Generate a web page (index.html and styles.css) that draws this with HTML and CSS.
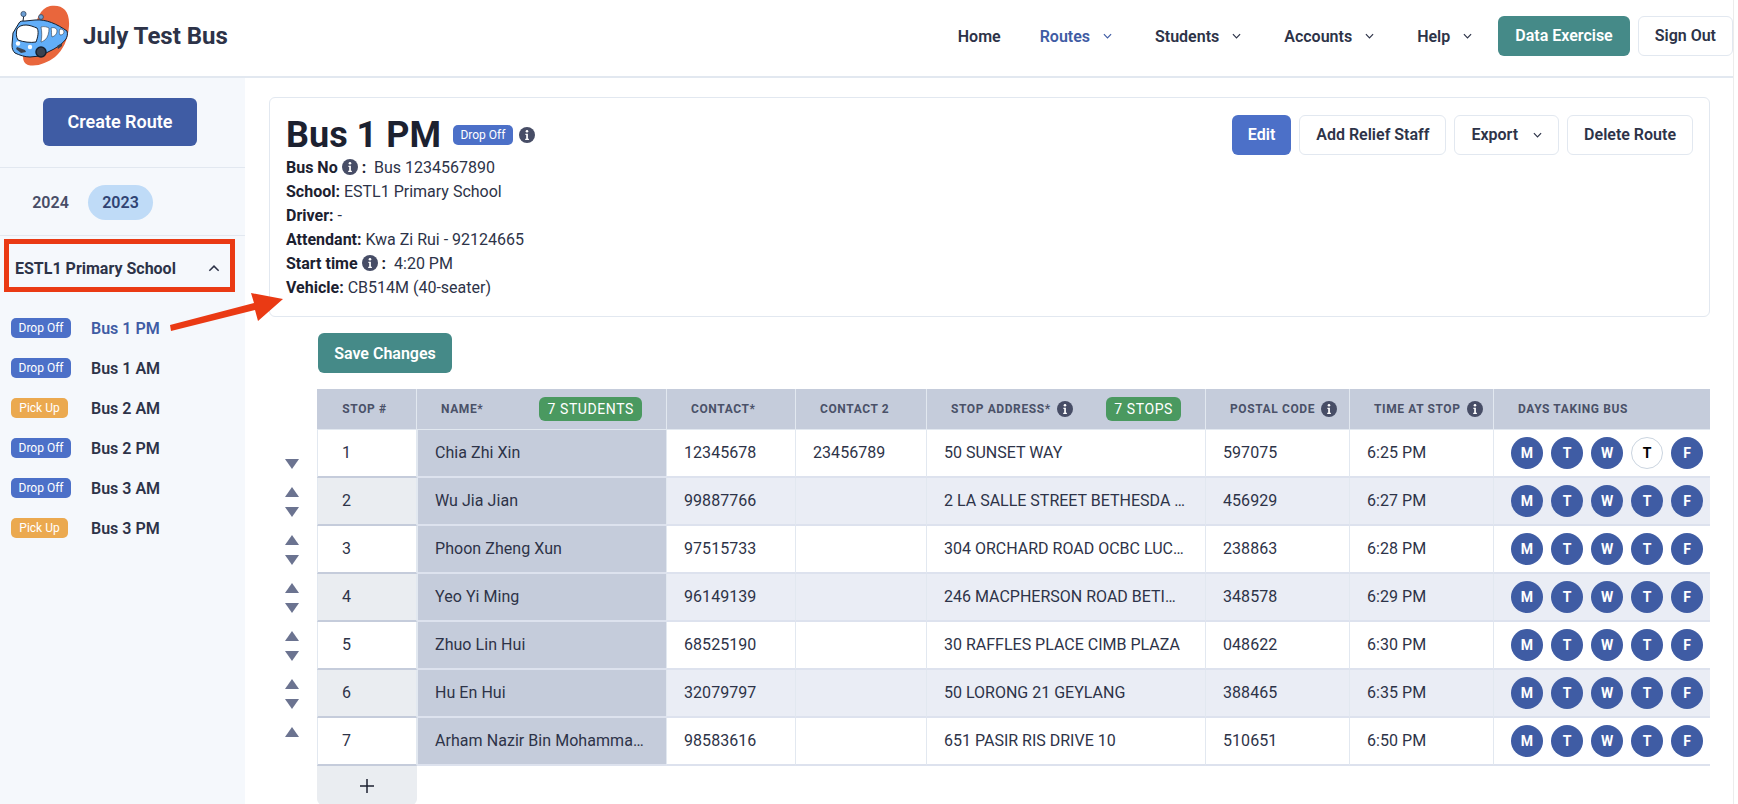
FILE: index.html
```html
<!DOCTYPE html>
<html lang="en">
<head>
<meta charset="UTF-8">
<meta name="viewport" content="width=device-width, initial-scale=1.0">
<title>July Test Bus</title>
<link rel="stylesheet" href="styles.css">
</head>
<body>

<svg class="icon-defs" width="0" height="0">
  <symbol id="info" viewBox="0 0 16 16">
    <circle cx="8" cy="8" r="8" fill="#474d66"/>
    <circle cx="8" cy="4.3" r="1.3" fill="#fff"/>
    <path d="M6.4 6.800h2.500v5h1V13H6.200v-1.200h1V8h-.8z" fill="#fff"/>
  </symbol>
  <symbol id="chev" viewBox="0 0 10 6">
    <path d="M1 1l4 4 4-4" fill="none" stroke="currentColor" stroke-width="1.3"/>
  </symbol>
</svg>

<header class="topbar">
  <div class="brand">
    <svg class="logo" viewBox="0 0 72 66">
      <path d="M50 6c12-2 20 4 19 20-1 14-6 24-14 31-8 6-18 10-27 8-5-2-6-7-4-14 2-8 5-14 9-21C37 20 40 8 50 6z" fill="#e9663c"/>
      <path d="M13 33l6-10c1-2 3-2 6-2l10-1c11-1 22 4 32 11 1 3 0 6-1 8-3 4-7 7-12 10l-14 7-10 1c-5 0-11-2-15-4-2-2-3-4-3-8z" fill="#62aef8" stroke="#17202e" stroke-width="1"/>
      <path d="M17 29c2-3 5-4 9-4 4 0 8 2 11 3 2 3 1 9-1 14-5 1-13 0-18-2-2-3-2-7-1-11z" fill="#fff" stroke="#17202e" stroke-width="1"/>
      <path d="M41 27c3-1 6 0 8 1 0 5-1 9-4 12-2 1-3 2-4 2 1-5 1-10 0-15zM51 28c3-1 6 0 6 3 0 3-2 5-5 6-1-3 0-6-1-9zM60 29c2 0 4 1 4 3s-2 3-4 3c-1-2-1-4 0-6z" fill="#fff" stroke="#17202e" stroke-width=".5"/>
      <circle cx="41" cy="52" r="5" fill="#3a4250" stroke="#17202e" stroke-width="1.500"/>
      <circle cx="18" cy="43.500" r="2.200" fill="#fff"/>
      <circle cx="30" cy="47" r="2.200" fill="#fff"/>
      <path d="M16 49l5 4 5-1-1-2-8-3zM58 49l4-3v-3l-5 3z" fill="#3a4250"/>
      <path d="M23 21l1-7M41 20v-3" stroke="#17202e" stroke-width="1"/>
      <circle cx="23.500" cy="14" r="2.600" fill="#6d9fd4" stroke="#33475f" stroke-width=".8"/>
      <circle cx="41" cy="17" r="2.400" fill="#6d9fd4" stroke="#33475f" stroke-width=".8"/>
    </svg>
    <span class="brand-name">July Test Bus</span>
  </div>
  <nav class="topnav">
    <a class="nav-link nav-home">Home</a>
    <a class="nav-link active">Routes <svg class="chev"><use href="#chev"/></svg></a>
    <a class="nav-link">Students <svg class="chev"><use href="#chev"/></svg></a>
    <a class="nav-link">Accounts <svg class="chev"><use href="#chev"/></svg></a>
    <a class="nav-link nav-help">Help <svg class="chev"><use href="#chev"/></svg></a>
    <button class="btn btn-teal data-btn">Data Exercise</button>
    <button class="btn btn-plain signout">Sign Out</button>
  </nav>
</header>

<div class="layout">
  <aside class="sidebar">
    <div class="side-create">
      <button class="btn create-btn">Create Route</button>
    </div>
    <div class="years">
      <span class="year">2024</span>
      <span class="year year-on">2023</span>
    </div>
    <div class="school-row">
      <span>ESTL1 Primary School</span>
      <svg class="chev-up"><use href="#chev"/></svg>
    </div>
    <ul class="route-list">
      <li><span class="badge drop">Drop Off</span><span class="route-name current">Bus 1 PM</span></li>
      <li><span class="badge drop">Drop Off</span><span class="route-name">Bus 1 AM</span></li>
      <li><span class="badge pick">Pick Up</span><span class="route-name">Bus 2 AM</span></li>
      <li><span class="badge drop">Drop Off</span><span class="route-name">Bus 2 PM</span></li>
      <li><span class="badge drop">Drop Off</span><span class="route-name">Bus 3 AM</span></li>
      <li><span class="badge pick">Pick Up</span><span class="route-name">Bus 3 PM</span></li>
    </ul>
  </aside>

  <main class="content">
    <section class="card">
      <div class="card-info">
        <div class="title-row">
          <h1>Bus 1 PM</h1>
          <span class="badge drop">Drop Off</span>
          <svg class="info"><use href="#info"/></svg>
        </div>
        <p><b>Bus No</b> <svg class="info"><use href="#info"/></svg> <b>:</b>&nbsp; Bus 1234567890</p>
        <p><b>School:</b> ESTL1 Primary School</p>
        <p><b>Driver:</b> -</p>
        <p><b>Attendant:</b> Kwa Zi Rui - 92124665</p>
        <p><b>Start time</b> <svg class="info"><use href="#info"/></svg> <b>:</b>&nbsp; 4:20 PM</p>
        <p><b>Vehicle:</b> CB514M (40-seater)</p>
      </div>
      <div class="card-actions">
        <button class="btn btn-blue">Edit</button>
        <button class="btn btn-plain">Add Relief Staff</button>
        <button class="btn btn-plain export-btn">Export <svg class="chev"><use href="#chev"/></svg></button>
        <button class="btn btn-plain">Delete Route</button>
      </div>
    </section>

    <div class="save-row">
      <button class="btn btn-teal save-btn">Save Changes</button>
    </div>

    <div class="table-area">
      <div class="movers">
        <div class="mover"><i></i><i class="down"></i></div>
        <div class="mover"><i class="up"></i><i class="down"></i></div>
        <div class="mover"><i class="up"></i><i class="down"></i></div>
        <div class="mover"><i class="up"></i><i class="down"></i></div>
        <div class="mover"><i class="up"></i><i class="down"></i></div>
        <div class="mover"><i class="up"></i><i class="down"></i></div>
        <div class="mover"><i class="up"></i><i></i></div>
      </div>
      <div class="table-col">
        <table class="stops">
          <colgroup>
            <col class="c-stop"><col class="c-name"><col class="c-contact"><col class="c-contact2">
            <col class="c-addr"><col class="c-postal"><col class="c-time"><col class="c-days">
          </colgroup>
          <thead>
            <tr>
              <th class="center">Stop #</th>
              <th><div class="th-flex"><span>Name*</span><span class="count">7 Students</span></div></th>
              <th>Contact*</th>
              <th>Contact 2</th>
              <th><div class="th-flex"><span class="th-icon">Stop Address* <svg class="info"><use href="#info"/></svg></span><span class="count">7 Stops</span></div></th>
              <th><span class="th-icon">Postal Code <svg class="info"><use href="#info"/></svg></span></th>
              <th><span class="th-icon">Time at Stop <svg class="info"><use href="#info"/></svg></span></th>
              <th>Days Taking Bus</th>
            </tr>
          </thead>
          <tbody>
            <tr>
              <td class="stop-no">1</td><td class="name">Chia Zhi Xin</td><td>12345678</td><td>23456789</td>
              <td class="addr">50 SUNSET WAY</td><td>597075</td><td>6:25 PM</td>
              <td class="days"><div class="day-row"><span class="day">M</span><span class="day">T</span><span class="day">W</span><span class="day off">T</span><span class="day">F</span></div></td>
            </tr>
            <tr>
              <td class="stop-no">2</td><td class="name">Wu Jia Jian</td><td>99887766</td><td></td>
              <td class="addr">2 LA SALLE STREET BETHESDA …</td><td>456929</td><td>6:27 PM</td>
              <td class="days"><div class="day-row"><span class="day">M</span><span class="day">T</span><span class="day">W</span><span class="day">T</span><span class="day">F</span></div></td>
            </tr>
            <tr>
              <td class="stop-no">3</td><td class="name">Phoon Zheng Xun</td><td>97515733</td><td></td>
              <td class="addr">304 ORCHARD ROAD OCBC LUC…</td><td>238863</td><td>6:28 PM</td>
              <td class="days"><div class="day-row"><span class="day">M</span><span class="day">T</span><span class="day">W</span><span class="day">T</span><span class="day">F</span></div></td>
            </tr>
            <tr>
              <td class="stop-no">4</td><td class="name">Yeo Yi Ming</td><td>96149139</td><td></td>
              <td class="addr">246 MACPHERSON ROAD BETI…</td><td>348578</td><td>6:29 PM</td>
              <td class="days"><div class="day-row"><span class="day">M</span><span class="day">T</span><span class="day">W</span><span class="day">T</span><span class="day">F</span></div></td>
            </tr>
            <tr>
              <td class="stop-no">5</td><td class="name">Zhuo Lin Hui</td><td>68525190</td><td></td>
              <td class="addr">30 RAFFLES PLACE CIMB PLAZA</td><td>048622</td><td>6:30 PM</td>
              <td class="days"><div class="day-row"><span class="day">M</span><span class="day">T</span><span class="day">W</span><span class="day">T</span><span class="day">F</span></div></td>
            </tr>
            <tr>
              <td class="stop-no">6</td><td class="name">Hu En Hui</td><td>32079797</td><td></td>
              <td class="addr">50 LORONG 21 GEYLANG</td><td>388465</td><td>6:35 PM</td>
              <td class="days"><div class="day-row"><span class="day">M</span><span class="day">T</span><span class="day">W</span><span class="day">T</span><span class="day">F</span></div></td>
            </tr>
            <tr>
              <td class="stop-no">7</td><td class="name">Arham Nazir Bin Mohamma…</td><td>98583616</td><td></td>
              <td class="addr">651 PASIR RIS DRIVE 10</td><td>510651</td><td>6:50 PM</td>
              <td class="days"><div class="day-row"><span class="day">M</span><span class="day">T</span><span class="day">W</span><span class="day">T</span><span class="day">F</span></div></td>
            </tr>
          </tbody>
        </table>
        <button class="add-row">
          <svg width="16" height="16" viewBox="0 0 16 16"><path d="M8 1v14M1 8h14" stroke="#1c2130" stroke-width="1.500"/></svg>
        </button>
      </div>
    </div>
  </main>
</div>

<!-- annotation arrow over the sidebar and card -->
<svg class="callout" width="120" height="55" viewBox="0 0 120 55">
  <path d="M1 45L85 23 82 13l32 6-25 22-3-11L2 51z" fill="#ea3a14"/>
</svg>

</body>
</html>
```

FILE: styles.css
```css
* {
  box-sizing: border-box;
}
html, body {
  margin: 0;
  height: 100%;
  overflow: hidden;
}
body {
  font-family: Roboto, "Liberation Sans", sans-serif;
  color: #1c2130;
  background-color: #fff;
  font-size: 16px;
  position: relative;
}
/* page edge line on the far right */
body::after {
  content: "";
  position: absolute;
  top: 0;
  right: 0;
  bottom: 0;
  width: 4px;
  background-color: #fff;
  border-left: 1px solid #ececec;
}
button {
  font-family: inherit;
  cursor: pointer;
}
.icon-defs {
  position: absolute;
}

/* top bar */
.topbar {
  height: 78px;
  border-bottom: 2px solid #e2e8f0;
  padding-bottom: 4px;
  display: flex;
  align-items: center;
  justify-content: space-between;
}
.brand {
  display: flex;
  align-items: center;
  gap: 11px;
}
.logo {
  width: 72px;
  height: 66px;
  margin-bottom: 6px;
}
.brand-name {
  font-size: 24px;
  font-weight: 700;
  color: #2d3348;
}
.topnav {
  display: flex;
  align-items: center;
  height: 40px;
  padding-right: 5px;
}
.nav-link {
  font-weight: 600;
  color: #2d3348;
  display: flex;
  align-items: center;
  gap: 11px;
  margin-right: 43px;
}
.nav-link.active {
  color: #3f5ca4;
}
.nav-home {
  margin-right: 39px;
}
.nav-help {
  margin-right: 26px;
}
.chev {
  width: 9px;
  height: 6px;
  margin-left: 2px;
}
.data-btn {
  padding: 0 14px 1px;
}
.signout {
  margin-left: 8px;
}

/* buttons */
.btn {
  height: 40px;
  padding: 0 16px 1px;
  border-radius: 6px;
  border: 1px solid transparent;
  font-size: 16px;
  font-weight: 600;
  white-space: nowrap;
  display: inline-flex;
  align-items: center;
  gap: 10px;
}
.btn-teal {
  background-color: #458a88;
  color: #fff;
}
.btn-blue {
  background-color: #4c70c8;
  color: #fff;
  padding: 0 15px 1px;
}
.btn-plain {
  background-color: #fff;
  border-color: #e2e8f0;
  color: #2d3348;
}
.export-btn {
  gap: 13px;
}

.layout {
  display: flex;
  height: calc(100% - 78px);
}

/* sidebar */
.sidebar {
  width: 245px;
  flex-shrink: 0;
  background-color: #f5f8fc;
}
.side-create {
  height: 90px;
  padding: 20px 0 0 43px;
  border-bottom: 1px solid #e2e8f0;
}
.create-btn {
  width: 154px;
  height: 48px;
  justify-content: center;
  background-color: #3f5ca4;
  color: #fff;
  font-size: 18px;
}
.years {
  height: 68px;
  padding: 17px 0 0 18px;
  display: flex;
  gap: 5px;
  border-bottom: 1px solid #e2e8f0;
}
.year {
  width: 65px;
  height: 35px;
  border-radius: 18px;
  display: flex;
  align-items: center;
  justify-content: center;
  font-weight: 600;
  color: #474d66;
}
.year-on {
  background-color: #bfdbf7;
  color: #2f4373;
}
.school-row {
  margin: 3px 10px 0 4px;
  height: 53px;
  border: 5.5px solid #ea3a14;
  padding: 6px 10px 0 6px;
  display: flex;
  align-items: center;
  justify-content: space-between;
  font-weight: 700;
  color: #2d3348;
}
.chev-up {
  width: 12px;
  height: 7px;
  transform: rotate(180deg);
}
.route-list {
  list-style: none;
  margin: 16px 0 0;
  padding: 0 0 0 11px;
}
.route-list li {
  height: 40px;
  display: flex;
  align-items: center;
  gap: 20px;
}
.badge {
  width: 60px;
  height: 20px;
  border-radius: 5px;
  font-size: 12px;
  display: inline-flex;
  align-items: center;
  justify-content: center;
  color: #fff;
}
.drop {
  background-color: #4c70c8;
}
.pick {
  width: 57px;
  margin-right: 3px;
  background-color: #eba94f;
}
.route-name {
  font-weight: 600;
  color: #2d3348;
}
.route-name.current {
  color: #3f5ca4;
}

/* main column */
.content {
  flex: 1;
  min-width: 0;
  padding: 19px 28px 0 24px;
}
.card {
  height: 220px;
  border: 1px solid #e2e8f0;
  border-radius: 6px;
  padding: 16px 16px 0;
  display: flex;
  justify-content: space-between;
}
.title-row {
  height: 42px;
  display: flex;
  align-items: center;
  gap: 6px;
}
.title-row h1 {
  margin: 0 6px 0 0;
  font-size: 36px;
  font-weight: 700;
}
.card p {
  margin: 0;
  height: 24px;
  line-height: 24px;
  color: #2d3348;
}
.card p b {
  font-weight: 700;
  color: #1c2130;
}
.card p .info {
  vertical-align: -2px;
}
.info {
  width: 16px;
  height: 16px;
  flex-shrink: 0;
}
.card-actions {
  display: flex;
  gap: 8px;
  padding-top: 1px;
}
.save-row {
  margin: 16px 0 16px 49px;
}
.save-btn {
  width: 134px;
  padding: 0;
  justify-content: center;
}

/* stops table */
.table-area {
  display: flex;
}
.movers {
  width: 48px;
  flex-shrink: 0;
  padding-top: 41px;
}
.mover {
  height: 48px;
  padding-top: 4px;
}
.mover i {
  display: block;
  height: 20px;
  position: relative;
}
.mover .up::before,
.mover .down::before {
  content: "";
  position: absolute;
  left: 16px;
  top: 5px;
  width: 14px;
  height: 10px;
  background-color: #6b7390;
}
.mover .up::before {
  clip-path: polygon(50% 0, 100% 100%, 0 100%);
}
.mover .down::before {
  clip-path: polygon(0 0, 100% 0, 50% 100%);
}
.table-col {
  width: 1393px;
}
.stops {
  width: 100%;
  table-layout: fixed;
  border-collapse: separate;
  border-spacing: 0;
}
.c-stop { width: 100px; }
.c-name { width: 250px; }
.c-contact { width: 129px; }
.c-contact2 { width: 131px; }
.c-addr { width: 279px; }
.c-postal { width: 144px; }
.c-time { width: 144px; }
.c-days { width: 216px; }
.stops th {
  height: 41px;
  background-color: #c5ccdb;
  border-right: 1px solid #e2e8f0;
  border-bottom: 1px solid #e2e8f0;
  font-size: 12px;
  font-weight: 700;
  letter-spacing: .6px;
  text-transform: uppercase;
  text-align: left;
  color: #4a5168;
  padding: 0 0 0 24px;
  white-space: nowrap;
}
.stops th.center {
  padding: 0 4px 0 0;
  text-align: center;
}
.stops th:last-child,
.stops td:last-child {
  border-right: 0;
}
.th-flex {
  display: flex;
  align-items: center;
  justify-content: space-between;
  padding-right: 24px;
}
.th-icon {
  display: inline-flex;
  align-items: center;
  gap: 6px;
}
.count {
  height: 24px;
  padding: 0 8px;
  border-radius: 6px;
  background-color: #4a9960;
  color: #fff;
  font-weight: 400;
  font-size: 14px;
  letter-spacing: .6px;
  display: inline-flex;
  align-items: center;
}
.stops td {
  height: 48px;
  padding: 0 17px 2px;
  border-right: 1px solid #e2e8f0;
  border-bottom: 2px solid #dde2ee;
  letter-spacing: .05px;
  white-space: nowrap;
  overflow: hidden;
  color: #2d3348;
}
.stops td.addr {
  letter-spacing: 0;
}
.stops tbody tr:nth-child(even) td {
  background-color: #eaedf5;
}
.stops td.stop-no {
  padding-left: 24px;
  border-left: 1px solid #e2e8f0;
  border-bottom-color: #c5ccdb;
}
.stops tbody tr:nth-child(even) td.stop-no {
  background-color: #eaedf1;
}
.stops tbody tr td.name,
.stops tbody tr:nth-child(even) td.name {
  background-color: #c5ccdb;
  border-left: 1px solid #e2e8f0;
  border-bottom-color: #dde2ee;
}
.stops td.days {
  padding: 0 0 0 17px;
}
.day-row {
  display: flex;
  gap: 8px;
}
.day {
  width: 32px;
  height: 32px;
  border-radius: 50%;
  background-color: #3f5ca4;
  color: #fff;
  font-size: 14px;
  font-weight: 700;
  letter-spacing: 0;
  display: flex;
  align-items: center;
  justify-content: center;
}
.day.off {
  background-color: #fff;
  color: #000;
  border: 1px solid #cbd5e0;
}
.add-row {
  display: flex;
  align-items: center;
  justify-content: center;
  width: 100px;
  height: 39px;
  padding: 0;
  border: 0;
  border-radius: 0 0 6px 6px;
  background-color: #eaedf1;
}

/* red annotation arrow */
.callout {
  position: absolute;
  left: 169px;
  top: 280px;
  pointer-events: none;
}
```
